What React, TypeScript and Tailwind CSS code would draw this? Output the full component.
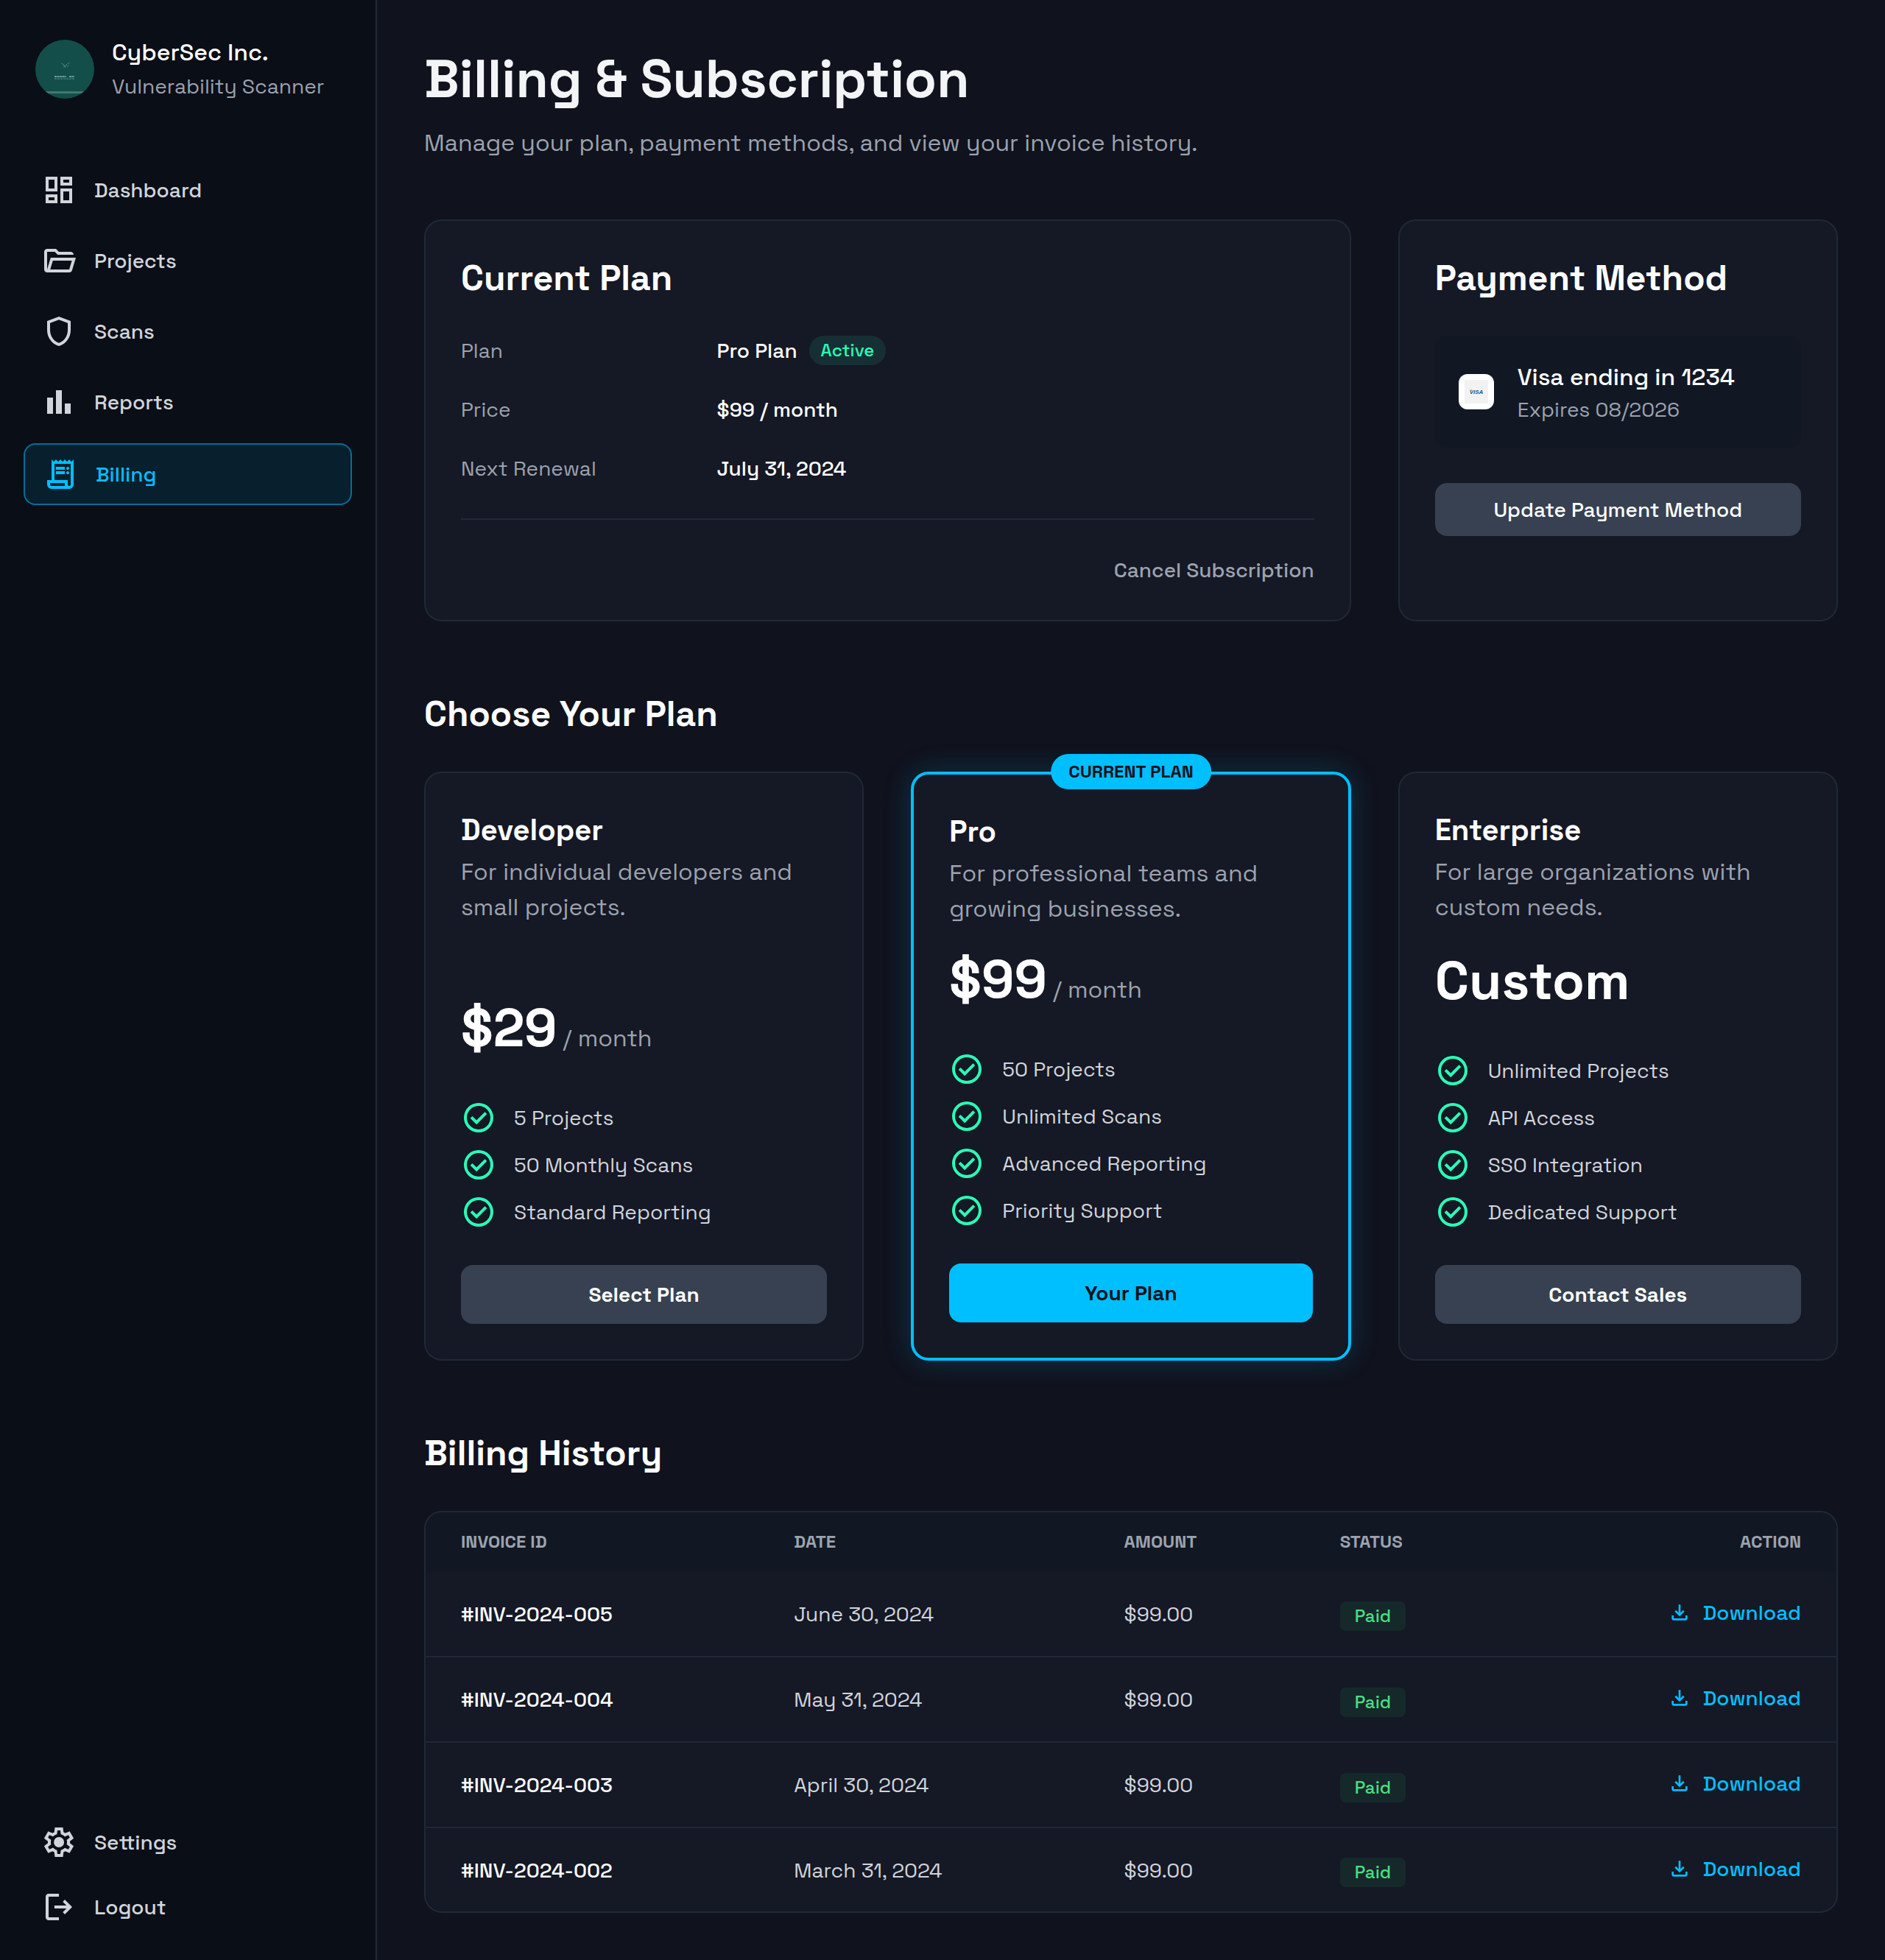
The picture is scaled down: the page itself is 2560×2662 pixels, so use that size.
import React from "react";

const ICONS = {
  dashboard:
    "M19 5v2h-4V5h4M9 5v6H5V5h4m10 8v6h-4v-6h4M9 17v2H5v-2h4M21 3h-8v6h8V3zM11 3H3v10h8V3zm10 8h-8v10h8V11zm-10 4H3v6h8v-6z",
  folder:
    "M4 20q-.825 0-1.412-.587T2 18V6q0-.825.588-1.412T4 4h6l2 2h8q.825 0 1.413.588T22 8H11.175l-2-2H4v12l2.4-8h17.1l-2.575 8.575q-.2.65-.737 1.038T19 20zm2.1-2H19l1.8-6H7.9z",
  shield:
    "M12 22q-3.475-.875-5.738-3.988T4 11.1V5l8-3l8 3v6.1q0 3.8-2.262 6.913T12 22m0-2.1q2.6-.825 4.3-3.3t1.7-5.5V6.375l-6-2.25l-6 2.25V11.1q0 3.025 1.7 5.5t4.3 3.3",
  bars: "M16 20v-7h4v7zm-6 0V4h4v16zm-6 0V9h4v11z",
  receipt:
    "M6 22q-1.25 0-2.125-.875T3 19v-3h3V2l1.5 1.5L9 2l1.5 1.5L12 2l1.5 1.5L15 2l1.5 1.5L18 2l1.5 1.5L21 2v17q0 1.25-.875 2.125T18 22zm12-2q.425 0 .713-.288T19 19V5H8v11h9v3q0 .425.288.713T18 20M9 9V7h6v2zm0 3v-2h6v2zm8-3q-.425 0-.713-.288T16 8t.288-.713T17 7t.713.288T18 8t-.288.713T17 9m0 3q-.425 0-.713-.288T16 11t.288-.713T17 10t.713.288T18 11t-.288.713T17 12M6 20h9v-2H5v1q0 .425.288.713T6 20",
  settings:
    "m9.25 22l-.4-3.2q-.325-.125-.612-.3t-.563-.375L4.7 19.375l-2.75-4.75l2.575-1.95Q4.5 12.5 4.5 12.338v-.675q0-.163.025-.338L1.95 9.375l2.75-4.75l2.975 1.25q.275-.2.575-.375t.6-.3l.4-3.2h5.5l.4 3.2q.325.125.613.3t.562.375l2.975-1.25l2.75 4.75l-2.575 1.95q.025.175.025.338v.674q0 .163-.05.338l2.575 1.95l-2.75 4.75l-2.95-1.25q-.275.2-.575.375t-.6.3l-.4 3.2zM11 20h1.975l.35-2.65q.775-.2 1.438-.587t1.212-.938l2.475 1.025l.975-1.7l-2.15-1.625q.125-.35.175-.737T17.5 12t-.05-.787t-.175-.738l2.15-1.625l-.975-1.7l-2.475 1.05q-.55-.575-1.212-.962t-1.438-.588L13 4h-1.975l-.35 2.65q-.775.2-1.437.588t-1.213.937L5.55 7.15l-.975 1.7l2.15 1.6q-.125.375-.175.75t-.05.8q0 .4.05.775t.175.75l-2.15 1.625l.975 1.7l2.475-1.05q.55.575 1.213.963t1.437.587zm1.05-4.5q1.45 0 2.475-1.025T15.55 12t-1.025-2.475T12.05 8.5q-1.475 0-2.488 1.025T8.55 12t1.013 2.475T12.05 15.5",
  logout:
    "M5 21q-.825 0-1.412-.587T3 19V5q0-.825.588-1.412T5 3h7v2H5v14h7v2zm11-4l-1.375-1.45l2.55-2.55H9v-2h8.175l-2.55-2.55L16 7l5 5z",
  check:
    "m10.6 16.6l7.05-7.05l-1.4-1.4l-5.65 5.65l-2.85-2.85l-1.4 1.4zM12 22q-2.075 0-3.9-.788t-3.175-2.137T2.788 15.9T2 12t.788-3.9t2.137-3.175T8.1 2.788T12 2t3.9.788t3.175 2.137T21.213 8.1T22 12t-.788 3.9t-2.137 3.175t-3.175 2.138T12 22m0-2q3.35 0 5.675-2.325T20 12t-2.325-5.675T12 4T6.325 6.325T4 12t2.325 5.675T12 20",
  download:
    "m12 16l-5-5l1.4-1.45l2.6 2.6V4h2v8.15l2.6-2.6L17 11zm-6 4q-.825 0-1.412-.587T4 18v-3h2v3h12v-3h2v3q0 .825-.587 1.413T18 20z",
};

type IconName = keyof typeof ICONS;

function Icon({ name, className = "size-12" }: { name: IconName; className?: string }) {
  return (
    <svg viewBox="0 0 24 24" fill="currentColor" aria-hidden="true" className={`shrink-0 ${className}`}>
      <path d={ICONS[name]} />
    </svg>
  );
}

function NavItem({ icon, label, active = false }: { icon: IconName; label: string; active?: boolean }) {
  return (
    <a
      href="#"
      aria-current={active ? "page" : undefined}
      className={`flex items-center gap-6 rounded-2xl px-6 py-4 text-[28px] leading-[40px] font-medium ${
        active ? "border-2 border-[#00bfff]/50 bg-[#00bfff]/10 text-[#00bfff]" : "text-[#d1d5db]"
      }`}
    >
      <Icon name={icon} />
      {label}
    </a>
  );
}

function Avatar() {
  return (
    <svg viewBox="0 0 80 80" aria-hidden="true" className="size-20 shrink-0 rounded-full">
      <rect width="80" height="80" fill="#134e4a" />
      <path
        d="M35 32q3 0 5 4q3 -4 7 -5M37 34q3 2 4 4M38 38l5 -4M43 37l3 -3"
        fill="none"
        stroke="#5b9a90"
        strokeWidth="0.6"
      />
      <path d="M26 50h16M46 50h7" stroke="#8fb8b0" strokeWidth="1.6" strokeDasharray="3 0.6" />
      <path d="M26 53h28" stroke="#5f948c" strokeWidth="1" strokeDasharray="3 1" />
      <rect y="70" width="80" height="3" fill="#3c7a6c" />
    </svg>
  );
}

function Sidebar() {
  return (
    <aside className="flex w-128 shrink-0 flex-col justify-between border-r-2 border-[#1f2937] bg-[#0a0e17] p-8">
      <div>
        <div className="flex items-center gap-6 px-4 pt-4">
          <Avatar />
          <div>
            <p className="text-[32px] leading-[46px] font-medium text-white">CyberSec Inc.</p>
            <p className="text-[28px] leading-[46px] text-[#9ca3af]">Vulnerability Scanner</p>
          </div>
        </div>
        <nav aria-label="Main" className="mt-[78px] flex flex-col gap-4">
          <NavItem icon="dashboard" label="Dashboard" />
          <NavItem icon="folder" label="Projects" />
          <NavItem icon="shield" label="Scans" />
          <NavItem icon="bars" label="Reports" />
          <NavItem icon="receipt" label="Billing" active />
        </nav>
      </div>
      <nav aria-label="Account" className="flex flex-col gap-2">
        <NavItem icon="settings" label="Settings" />
        <NavItem icon="logout" label="Logout" />
      </nav>
    </aside>
  );
}

const CARD = "rounded-3xl border-2 border-[#1f2937] bg-[#151825] p-12";
const HEADING = "text-[48px] leading-[60px] font-bold text-white";

function CurrentPlan() {
  return (
    <section className={`col-span-2 ${CARD}`}>
      <h2 className={HEADING}>Current Plan</h2>
      <dl className="mt-12 grid grid-cols-[30%_1fr] gap-y-10 border-b-2 border-[#1f2937] pb-12 text-[28px] leading-[40px]">
        <dt className="text-[#9ca3af]">Plan</dt>
        <dd className="flex items-center gap-4 font-medium text-white">
          Pro Plan
          <span className="rounded-full bg-[#2affb8]/10 px-4 text-[24px] text-[#2affb8]">Active</span>
        </dd>
        <dt className="text-[#9ca3af]">Price</dt>
        <dd className="font-medium text-white">$99 / month</dd>
        <dt className="text-[#9ca3af]">Next Renewal</dt>
        <dd className="font-medium text-white">July 31, 2024</dd>
      </dl>
      <div className="mt-12 flex justify-end">
        <button type="button" className="text-[28px] leading-[40px] font-medium text-[#9ca3af]">
          Cancel Subscription
        </button>
      </div>
    </section>
  );
}

function VisaBadge() {
  return (
    <span className="flex size-12 shrink-0 items-center justify-center rounded-xl bg-white">
      <svg viewBox="0 0 32 32" className="size-8" role="img" aria-label="Visa">
        <rect width="32" height="32" fill="#f2f2f2" />
        <text
          x="16"
          y="19"
          textAnchor="middle"
          fontSize="8"
          fontWeight="700"
          fontStyle="italic"
          fontFamily="Liberation Sans, sans-serif"
          fill="#0e5a9c"
        >
          VISA
        </text>
        <path d="M7 13h3l1 3z" fill="#f0a92e" />
      </svg>
    </span>
  );
}

function PaymentMethod() {
  return (
    <section className={CARD}>
      <h2 className={HEADING}>Payment Method</h2>
      <div className="mt-12 flex items-center gap-8 rounded-2xl bg-[#111824] p-8">
        <VisaBadge />
        <div>
          <p className="text-[32px] leading-[48px] font-medium text-white">Visa ending in 1234</p>
          <p className="text-[28px] leading-[40px] text-[#9ca3af]">Expires 08/2026</p>
        </div>
      </div>
      <button
        type="button"
        className="mt-12 w-full rounded-2xl bg-[#374151] py-4 text-[28px] leading-[40px] font-medium text-white"
      >
        Update Payment Method
      </button>
    </section>
  );
}

type Plan = {
  name: string;
  blurb: string;
  price: string;
  period?: string;
  features: string[];
  action: string;
  current?: boolean;
};

const PLANS: Plan[] = [
  {
    name: "Developer",
    blurb: "For individual developers and small projects.",
    price: "$29",
    period: "/ month",
    features: ["5 Projects", "50 Monthly Scans", "Standard Reporting"],
    action: "Select Plan",
  },
  {
    name: "Pro",
    blurb: "For professional teams and growing businesses.",
    price: "$99",
    period: "/ month",
    features: ["50 Projects", "Unlimited Scans", "Advanced Reporting", "Priority Support"],
    action: "Your Plan",
    current: true,
  },
  {
    name: "Enterprise",
    blurb: "For large organizations with custom needs.",
    price: "Custom",
    features: ["Unlimited Projects", "API Access", "SSO Integration", "Dedicated Support"],
    action: "Contact Sales",
  },
];

function PlanCard({ plan }: { plan: Plan }) {
  return (
    <article
      className={`relative flex flex-col rounded-3xl bg-[#151825] p-12 ${
        plan.current ? "border-4 border-[#00bfff] shadow-[0_0_40px_rgba(0,191,255,0.2)]" : "border-2 border-[#1f2937]"
      }`}
    >
      {plan.current && (
        <span className="absolute -top-7 left-1/2 -translate-x-1/2 rounded-full bg-[#00bfff] px-6 py-2 text-[24px] leading-[32px] font-bold whitespace-nowrap text-[#10121d]">
          CURRENT PLAN
        </span>
      )}
      <h3 className="text-[40px] leading-[60px] font-bold text-white">{plan.name}</h3>
      <p className="mt-0.5 text-[32px] leading-[48px] text-[#9ca3af]">{plan.blurb}</p>
      <p className="mt-auto flex items-baseline gap-2 pt-7 text-[72px] leading-[84px] font-bold text-white">
        {plan.price}
        {plan.period && <span className="text-[32px] leading-[48px] font-normal text-[#9ca3af]">{plan.period}</span>}
      </p>
      <ul className="mt-14 flex flex-col gap-4">
        {plan.features.map((feature) => (
          <li key={feature} className="flex items-center gap-6 text-[28px] leading-[40px] text-[#d1d5db]">
            <Icon name="check" className="size-12 text-[#2affb8]" />
            {feature}
          </li>
        ))}
      </ul>
      <button
        type="button"
        className={`mt-12 w-full rounded-2xl py-5 text-[28px] leading-[40px] font-semibold ${
          plan.current ? "bg-[#00bfff] text-[#10121d]" : "bg-[#374151] text-white"
        }`}
      >
        {plan.action}
      </button>
    </article>
  );
}

const INVOICES = [
  { id: "#INV-2024-005", date: "June 30, 2024", amount: "$99.00" },
  { id: "#INV-2024-004", date: "May 31, 2024", amount: "$99.00" },
  { id: "#INV-2024-003", date: "April 30, 2024", amount: "$99.00" },
  { id: "#INV-2024-002", date: "March 31, 2024", amount: "$99.00" },
];

function BillingHistory() {
  return (
    <div className="mt-12 overflow-hidden rounded-3xl border-2 border-[#1f2937] bg-[#151825]">
      <table className="w-full table-fixed text-left text-[28px] leading-[40px]">
        <thead className="bg-[#111824] text-[24px] leading-[32px] text-[#9ca3af]">
          <tr>
            <th scope="col" className="w-[23.6%] px-12 py-6 font-bold">INVOICE ID</th>
            <th scope="col" className="w-[23.4%] px-12 py-6 font-bold">DATE</th>
            <th scope="col" className="w-[15.3%] px-12 py-6 font-bold">AMOUNT</th>
            <th scope="col" className="w-[14%] px-12 py-6 font-bold">STATUS</th>
            <th scope="col" className="px-12 py-6 text-right font-bold">ACTION</th>
          </tr>
        </thead>
        <tbody className="divide-y-2 divide-[#1f2937]">
          {INVOICES.map((invoice) => (
            <tr key={invoice.id} className="h-[116px] last:h-[114px]">
              <td className="px-12 font-medium whitespace-nowrap text-white">{invoice.id}</td>
              <td className="px-12 whitespace-nowrap text-[#d1d5db]">{invoice.date}</td>
              <td className="px-12 text-[#d1d5db]">{invoice.amount}</td>
              <td className="px-12 pt-1">
                <span className="inline-block rounded-lg bg-[#22c55e]/10 px-5 align-middle text-[24px] font-medium text-[#4ade80]">
                  Paid
                </span>
              </td>
              <td className="px-12 pb-1">
                <a href="#" className="flex items-center justify-end gap-4 font-medium text-[#00bfff]">
                  <Icon name="download" className="size-8" />
                  Download
                </a>
              </td>
            </tr>
          ))}
        </tbody>
      </table>
    </div>
  );
}

export default function App() {
  return (
    <div className="flex min-h-screen bg-[#10121d] font-['Space_Grotesk',Inter,sans-serif]">
      <Sidebar />
      <main className="min-w-0 flex-1 p-16">
        <header>
          <h1 className="text-[72px] leading-[86px] font-bold text-[#f3f4f6]">Billing &amp; Subscription</h1>
          <p className="mt-5 text-[32px] leading-[48px] text-[#9ca3af]">
            Manage your plan, payment methods, and view your invoice history.
          </p>
        </header>
        <div className="mt-20 grid grid-cols-3 gap-16">
          <CurrentPlan />
          <PaymentMethod />
        </div>
        <h2 className={`mt-24 ${HEADING}`}>Choose Your Plan</h2>
        <div className="mt-12 grid min-h-[800px] grid-cols-3 gap-16">
          {PLANS.map((plan) => (
            <PlanCard key={plan.name} plan={plan} />
          ))}
        </div>
        <h2 className={`mt-24 ${HEADING}`}>Billing History</h2>
        <BillingHistory />
      </main>
    </div>
  );
}
